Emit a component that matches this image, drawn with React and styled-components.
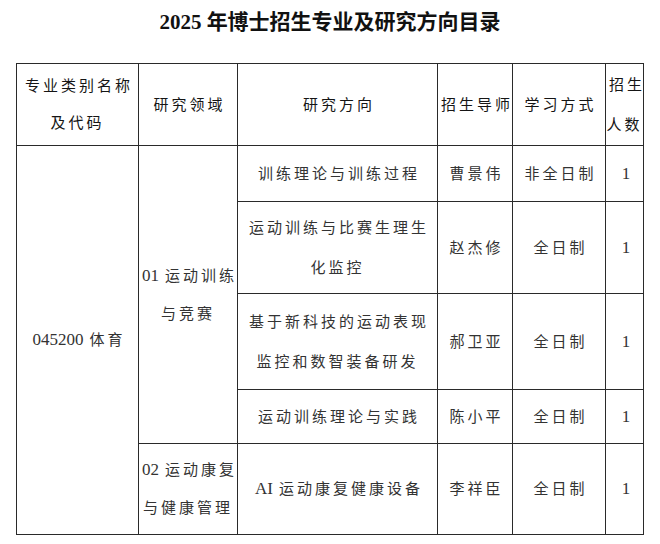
import React from "react";
import styled, { createGlobalStyle } from "styled-components";

const GlobalStyle = createGlobalStyle`
	html, body {
		margin: 0;
		padding: 0;
		background: #fff;
	}
	body {
		font-family: "Liberation Serif", "Noto Sans CJK SC", serif;
		color: #222;
	}
`;

const Page = styled.div`
	width: 660px;
	height: 544px;
	overflow: hidden;
`;

const Title = styled.h1`
	margin: 0 0 19px;
	height: 44px;
	line-height: 44px;
	text-align: center;
	font-size: 21px;
	font-weight: 700;
	color: #111;
`;

const Table = styled.table`
	margin-left: 16px;
	width: 627px;
	border-collapse: collapse;
	table-layout: fixed;
	td,
	th {
		border: 1px solid #2a2a2a;
		padding: 0;
		text-align: center;
		vertical-align: middle;
		white-space: nowrap;
		font-size: 15px;
		letter-spacing: 3px;
		text-indent: 3px;
	}
`;

const Head = styled.th`
	font-weight: 400;
	color: #151515;
	line-height: ${props => props.$lh || 38}px;
`;

const Cell = styled.td`
	color: #333;
	line-height: ${props => props.$lh || 40}px;
`;

const Num = styled.span`
	display: inline-block;
	font-size: 17px;
	letter-spacing: 0;
	text-indent: 0;
	margin-right: ${props => (props.$gap ? 6 : 0)}px;
`;

const Row = styled.tr`
	height: ${props => props.$h}px;
`;

const columns = [122, 99, 200, 75, 93, 38];

const rows = [
	{ h: 56, dir: ["训练理论与训练过程"], tutor: "曹景伟", mode: "非全日制" },
	{ h: 92, dir: ["运动训练与比赛生理生", "化监控"], tutor: "赵杰修", mode: "全日制" },
	{ h: 96, dir: ["基于新科技的运动表现", "监控和数智装备研发"], tutor: "郝卫亚", mode: "全日制" },
	{ h: 54, dir: ["运动训练理论与实践"], tutor: "陈小平", mode: "全日制" },
	{
		h: 91,
		dir: [
			<>
				<Num $gap>AI</Num>运动康复健康设备
			</>
		],
		tutor: "李祥臣",
		mode: "全日制"
	}
];

const Lines = ({ items }) =>
	items.map((t, i) => (
		<React.Fragment key={i}>
			{i > 0 && <br />}
			{t}
		</React.Fragment>
	));

export default function App() {
	return (
		<Page>
			<GlobalStyle />
			<Title>2025 年博士招生专业及研究方向目录</Title>
			<Table>
				<colgroup>
					{columns.map((w, i) => (
						<col key={i} style={{ width: w }} />
					))}
				</colgroup>
				<thead>
					<Row $h={82}>
						<Head $lh={37}>
							<Lines items={["专业类别名称", "及代码"]} />
						</Head>
						<Head>研究领域</Head>
						<Head>研究方向</Head>
						<Head>招生导师</Head>
						<Head>学习方式</Head>
						<Head $lh={40}>
							<Lines items={["招生", "人数"]} />
						</Head>
					</Row>
				</thead>
				<tbody>
					{rows.map((r, i) => (
						<Row key={i} $h={r.h}>
							{i === 0 && (
								<Cell rowSpan={5}>
									<Num $gap>045200</Num>体育
								</Cell>
							)}
							{i === 0 && (
								<Cell rowSpan={4} $lh={38}>
									<Lines
										items={[
											<>
												<Num $gap>01</Num>运动训练
											</>,
											"与竞赛"
										]}
									/>
								</Cell>
							)}
							{i === 4 && (
								<Cell $lh={38}>
									<Lines
										items={[
											<>
												<Num $gap>02</Num>运动康复
											</>,
											"与健康管理"
										]}
									/>
								</Cell>
							)}
							<Cell>
								<Lines items={r.dir} />
							</Cell>
							<Cell>{r.tutor}</Cell>
							<Cell>{r.mode}</Cell>
							<Cell>
								<Num>1</Num>
							</Cell>
						</Row>
					))}
				</tbody>
			</Table>
		</Page>
	);
}
